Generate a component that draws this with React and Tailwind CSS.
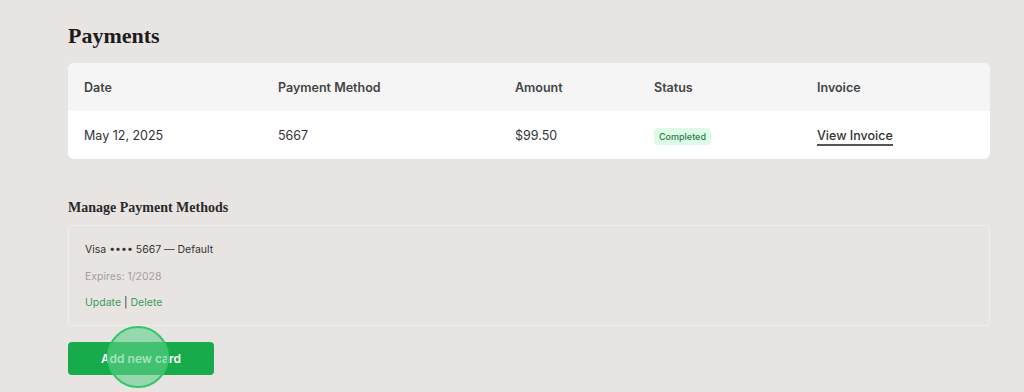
import React from 'react';

const cols = "grid grid-cols-[194px_237px_139px_163px_1fr] items-center";

const App = () => {
    return (
        <div className="w-[1024px] h-[392px] bg-[#e8e4e2] font-['Inter',sans-serif] overflow-hidden">
            <div className="pl-[68px] pr-[34px] pt-[21px]">
                <h1 className="font-['Liberation_Serif',serif] font-bold text-[22px] leading-[30px] text-[#1c1c1c]">Payments</h1>

                <div className="mt-[12px] bg-white rounded-md overflow-hidden">
                    <div className={`${cols} h-[48px] pt-[2px] bg-[#f5f5f5] text-[12.5px] font-semibold text-[#444]`}>
                        <div className="pl-4">Date</div>
                        <div className="pl-4">Payment Method</div>
                        <div className="pl-4">Amount</div>
                        <div className="pl-4">Status</div>
                        <div className="pl-4">Invoice</div>
                    </div>
                    <div className={`${cols} h-[48px] pt-[2px] text-[12.5px] text-[#333]`}>
                        <div className="pl-4">May 12, 2025</div>
                        <div className="pl-4">5667</div>
                        <div className="pl-4">$99.50</div>
                        <div className="pl-4">
                            <span className="inline-block bg-[#dcfce7] text-[#2f7a48] text-[9px] font-medium px-[5px] py-[4px] rounded-sm leading-none">Completed</span>
                        </div>
                        <div className="pl-4">
                            <a className="text-[#333] font-medium border-b-2 border-[#555] pb-[1px]">View Invoice</a>
                        </div>
                    </div>
                </div>

                <h2 className="mt-[40px] font-['Liberation_Serif',serif] font-bold text-[14px] leading-[18px] text-[#2a2a2a]">Manage Payment Methods</h2>

                <div className="mt-[8px] border border-[#f0eeec] rounded-sm h-[101px] px-4 pt-[17px] text-[10.5px] leading-[14px]">
                    <div className="text-[#333]">Visa •••• 5667 — Default</div>
                    <div className="mt-[13px] text-[#a3a09e]">Expires: 1/2028</div>
                    <div className="mt-[12px] text-[#3a9c5e]">
                        <span>Update</span>
                        <span className="text-[#333] mx-[3px]">|</span>
                        <span>Delete</span>
                    </div>
                </div>

                <div className="relative mt-[16px] w-[146px]">
                    <button className="w-[146px] h-[33px] bg-[#17ab4c] rounded-sm text-white text-[12px] font-semibold">Add new card</button>
                    <div className="absolute left-[39px] top-[-16px] w-[62px] h-[62px] rounded-full bg-[#5fd08a]/60 border-[2px] border-[#37c46a]"></div>
                </div>
            </div>
        </div>
    );
};

export default App;
